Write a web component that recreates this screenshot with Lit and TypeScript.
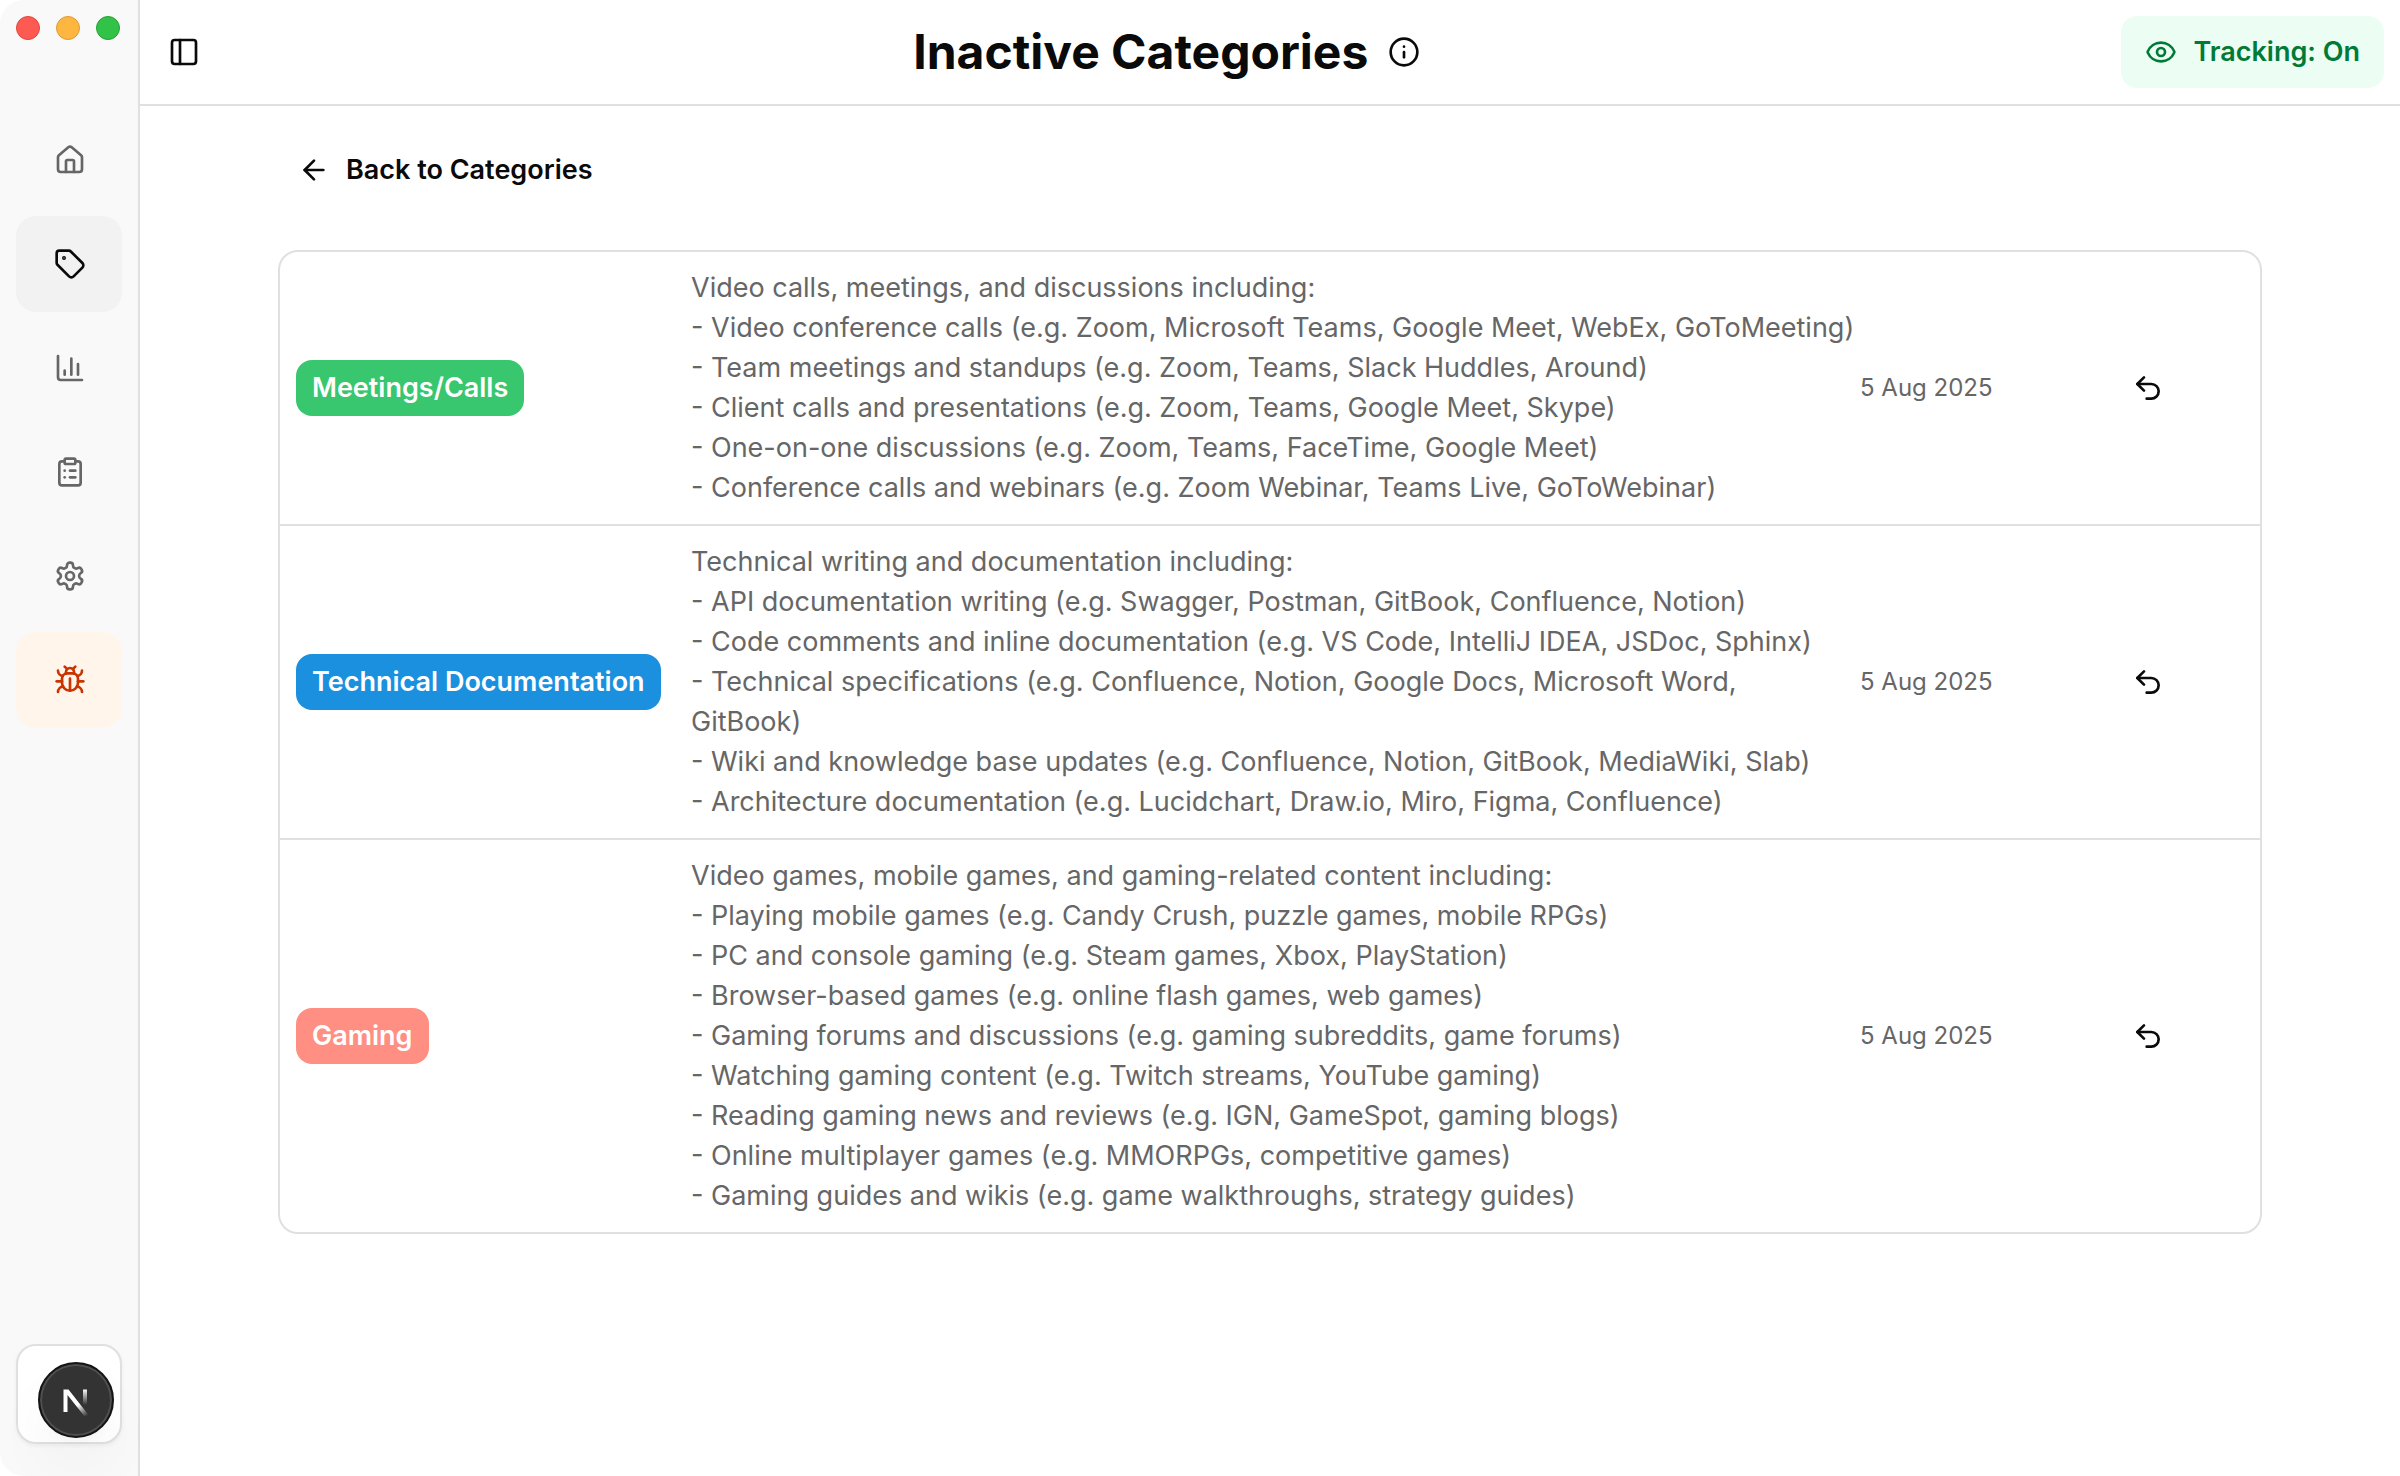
import { LitElement, html, css, svg } from "lit";
import { customElement } from "lit/decorators.js";
import { classMap } from "lit/directives/class-map.js";

type Shape = ReturnType<typeof svg>;

const shapes: Record<string, Shape> = {
  home: svg`<path d="M15 21v-8a1 1 0 0 0-1-1h-4a1 1 0 0 0-1 1v8"/><path d="M3 10a2 2 0 0 1 .709-1.528l7-5.999a2 2 0 0 1 2.582 0l7 5.999A2 2 0 0 1 21 10v9a2 2 0 0 1-2 2H5a2 2 0 0 1-2-2z"/>`,
  tag: svg`<path d="M12.586 2.586A2 2 0 0 0 11.172 2H4a2 2 0 0 0-2 2v7.172a2 2 0 0 0 .586 1.414l8.704 8.704a2.426 2.426 0 0 0 3.42 0l6.58-6.58a2.426 2.426 0 0 0 0-3.42z"/><circle cx="7.5" cy="7.5" r=".5" fill="currentColor"/>`,
  chart: svg`<path d="M3 3v16a2 2 0 0 0 2 2h16"/><path d="M18 17V9"/><path d="M13 17V5"/><path d="M8 17v-3"/>`,
  clipboard: svg`<rect width="8" height="4" x="8" y="2" rx="1" ry="1"/><path d="M16 4h2a2 2 0 0 1 2 2v14a2 2 0 0 1-2 2H6a2 2 0 0 1-2-2V6a2 2 0 0 1 2-2h2"/><path d="M12 11h4"/><path d="M12 16h4"/><path d="M8 11h.01"/><path d="M8 16h.01"/>`,
  settings: svg`<path d="M12.22 2h-.44a2 2 0 0 0-2 2v.18a2 2 0 0 1-1 1.73l-.43.25a2 2 0 0 1-2 0l-.15-.08a2 2 0 0 0-2.73.73l-.22.38a2 2 0 0 0 .73 2.73l.15.1a2 2 0 0 1 1 1.72v.51a2 2 0 0 1-1 1.74l-.15.09a2 2 0 0 0-.73 2.73l.22.38a2 2 0 0 0 2.73.73l.15-.08a2 2 0 0 1 2 0l.43.25a2 2 0 0 1 1 1.73V20a2 2 0 0 0 2 2h.44a2 2 0 0 0 2-2v-.18a2 2 0 0 1 1-1.73l.43-.25a2 2 0 0 1 2 0l.15.08a2 2 0 0 0 2.73-.73l.22-.39a2 2 0 0 0-.73-2.73l-.15-.08a2 2 0 0 1-1-1.74v-.5a2 2 0 0 1 1-1.74l.15-.09a2 2 0 0 0 .73-2.73l-.22-.38a2 2 0 0 0-2.73-.73l-.15.08a2 2 0 0 1-2 0l-.43-.25a2 2 0 0 1-1-1.73V4a2 2 0 0 0-2-2z"/><circle cx="12" cy="12" r="3"/>`,
  bug: svg`<path d="M12 20v-9"/><path d="M14 7a4 4 0 0 1 4 4v3a6 6 0 0 1-12 0v-3a4 4 0 0 1 4-4z"/><path d="M14.12 3.88 16 2"/><path d="M21 21a4 4 0 0 0-3.81-4"/><path d="M21 5a4 4 0 0 1-3.55 3.97"/><path d="M22 13h-4"/><path d="M3 21a4 4 0 0 1 3.81-4"/><path d="M3 5a4 4 0 0 0 3.55 3.97"/><path d="M6 13H2"/><path d="m8 2 1.88 1.88"/><path d="M9 7.13V6a3 3 0 1 1 6 0v1.13"/>`,
  panel: svg`<rect width="18" height="18" x="3" y="3" rx="2"/><path d="M9 3v18"/>`,
  info: svg`<circle cx="12" cy="12" r="10"/><path d="M12 16v-4"/><path d="M12 8h.01"/>`,
  eye: svg`<path d="M2.062 12.348a1 1 0 0 1 0-.696 10.75 10.75 0 0 1 19.876 0 1 1 0 0 1 0 .696 10.75 10.75 0 0 1-19.876 0"/><circle cx="12" cy="12" r="3"/>`,
  back: svg`<path d="m12 19-7-7 7-7"/><path d="M19 12H5"/>`,
  undo: svg`<path d="M9 14 4 9l5-5"/><path d="M4 9h10.5a5.5 5.5 0 0 1 5.5 5.5a5.5 5.5 0 0 1-5.5 5.5H11"/>`,
};

const icon = (name: string) => html`<svg
  class="icon"
  viewBox="0 0 24 24"
  fill="none"
  stroke="currentColor"
  stroke-width="2"
  stroke-linecap="round"
  stroke-linejoin="round"
  aria-hidden="true"
>${shapes[name]}</svg>`;

const navItems = [
  { icon: "home", label: "Home", href: "#home" },
  { icon: "tag", label: "Categories", href: "#categories", active: true },
  { icon: "chart", label: "Statistics", href: "#statistics" },
  { icon: "clipboard", label: "Projects", href: "#projects" },
  { icon: "settings", label: "Settings", href: "#settings" },
  { icon: "bug", label: "Report a bug", href: "#bug", alert: true },
];

const categories = [
  {
    name: "Meetings/Calls",
    tone: "green",
    date: "5 Aug 2025",
    lines: [
      "Video calls, meetings, and discussions including:",
      "- Video conference calls (e.g. Zoom, Microsoft Teams, Google Meet, WebEx, GoToMeeting)",
      "- Team meetings and standups (e.g. Zoom, Teams, Slack Huddles, Around)",
      "- Client calls and presentations (e.g. Zoom, Teams, Google Meet, Skype)",
      "- One-on-one discussions (e.g. Zoom, Teams, FaceTime, Google Meet)",
      "- Conference calls and webinars (e.g. Zoom Webinar, Teams Live, GoToWebinar)",
    ],
  },
  {
    name: "Technical Documentation",
    tone: "blue",
    date: "5 Aug 2025",
    lines: [
      "Technical writing and documentation including:",
      "- API documentation writing (e.g. Swagger, Postman, GitBook, Confluence, Notion)",
      "- Code comments and inline documentation (e.g. VS Code, IntelliJ IDEA, JSDoc, Sphinx)",
      "- Technical specifications (e.g. Confluence, Notion, Google Docs, Microsoft Word,",
      "GitBook)",
      "- Wiki and knowledge base updates (e.g. Confluence, Notion, GitBook, MediaWiki, Slab)",
      "- Architecture documentation (e.g. Lucidchart, Draw.io, Miro, Figma, Confluence)",
    ],
  },
  {
    name: "Gaming",
    tone: "coral",
    date: "5 Aug 2025",
    lines: [
      "Video games, mobile games, and gaming-related content including:",
      "- Playing mobile games (e.g. Candy Crush, puzzle games, mobile RPGs)",
      "- PC and console gaming (e.g. Steam games, Xbox, PlayStation)",
      "- Browser-based games (e.g. online flash games, web games)",
      "- Gaming forums and discussions (e.g. gaming subreddits, game forums)",
      "- Watching gaming content (e.g. Twitch streams, YouTube gaming)",
      "- Reading gaming news and reviews (e.g. IGN, GameSpot, gaming blogs)",
      "- Online multiplayer games (e.g. MMORPGs, competitive games)",
      "- Gaming guides and wikis (e.g. game walkthroughs, strategy guides)",
    ],
  },
];

@customElement("app-root")
export class AppRoot extends LitElement {
  static styles = css`
    :host {
      display: flex;
      min-height: 100vh;
      background: #fff;
      color: #0a0a0a;
      font-family: Inter, "Liberation Sans", sans-serif;
      font-size: 27px;
      line-height: 40px;
    }
    * {
      box-sizing: border-box;
    }
    button {
      font: inherit;
      color: inherit;
      background: none;
      border: 0;
      padding: 0;
      cursor: pointer;
    }
    a {
      color: inherit;
      text-decoration: none;
    }
    .icon {
      display: block;
      flex: none;
      width: 32px;
      height: 32px;
    }
    .sidebar {
      flex: none;
      display: flex;
      flex-direction: column;
      width: 140px;
      padding: 16px 16px 32px;
      background: #f9f9f9;
      border-right: 2px solid #e0e0e0;
      border-radius: 24px 0 0 24px;
    }
    .lights {
      display: flex;
      gap: 16px;
      height: 96px;
    }
    .light {
      width: 24px;
      height: 24px;
      border-radius: 50%;
      border: 1px solid;
    }
    .close {
      background: #ff5a52;
      border-color: #e0443e;
    }
    .minimise {
      background: #fdb63f;
      border-color: #dd9a35;
    }
    .maximise {
      background: #33c248;
      border-color: #24a036;
    }
    .nav {
      display: flex;
      flex-direction: column;
      gap: 8px;
      flex: 1;
    }
    .item {
      display: flex;
      align-items: center;
      height: 96px;
      padding-left: 38px;
      border-radius: 20px;
      color: #666;
    }
    .item.active {
      background: #f2f2f2;
      color: #0a0a0a;
    }
    .item.alert {
      background: #fff5ea;
      color: #c93400;
    }
    .account {
      height: 100px;
      background: #fff;
      border: 2px solid #e0e0e0;
      border-radius: 20px;
      box-shadow: 0 2px 4px rgba(0, 0, 0, 0.05);
    }
    .dev {
      position: fixed;
      left: 38px;
      bottom: 38px;
      display: grid;
      place-items: center;
      width: 76px;
      height: 76px;
      border-radius: 50%;
      background: #333;
      border: 2px solid #141414;
      box-shadow: inset 0 0 0 2px #4f4f4f, 0 32px 64px -8px rgba(0, 0, 0, 0.06),
        0 8px 16px -6px rgba(0, 0, 0, 0.04);
    }
    .mark {
      display: block;
      width: 32px;
      height: 32px;
      overflow: visible;
    }
    .page {
      flex: 1;
      min-width: 0;
    }
    .header {
      display: flex;
      align-items: center;
      justify-content: space-between;
      padding: 16px;
      border-bottom: 2px solid #e0e0e0;
    }
    .toggle {
      display: grid;
      place-items: center;
      width: 56px;
      height: 56px;
    }
    .heading {
      display: flex;
      align-items: center;
      gap: 20px;
    }
    .title {
      margin: 0;
      font-size: 48px;
      line-height: 64px;
      font-weight: 700;
    }
    .tracking {
      display: flex;
      align-items: center;
      gap: 16px;
      height: 72px;
      padding: 0 24px;
      border-radius: 16px;
      background: #ecfdf3;
      color: #007a37;
      font-weight: 600;
    }
    .content {
      max-width: 2048px;
      margin: 0 auto;
      padding: 32px;
    }
    .return {
      display: inline-flex;
      align-items: center;
      gap: 16px;
      height: 64px;
      padding: 0 20px;
      margin-bottom: 48px;
      font-weight: 600;
    }
    .card {
      border: 2px solid #e0e0e0;
      border-radius: 20px;
      overflow: hidden;
    }
    .table {
      width: 100%;
      table-layout: fixed;
      border-collapse: separate;
      border-spacing: 0;
    }
    .name-col {
      width: 395px;
    }
    .date-col {
      width: 192px;
    }
    .action-col {
      width: 224px;
    }
    .cell {
      padding: 16px;
      vertical-align: middle;
      text-align: left;
      font-weight: 400;
      white-space: nowrap;
    }
    .row + .row .cell {
      border-top: 2px solid #e0e0e0;
    }
    .badge {
      display: inline-block;
      padding: 8px 16px;
      border-radius: 16px;
      color: #fff;
      font-weight: 600;
      vertical-align: middle;
    }
    .green {
      background: #38c66f;
    }
    .blue {
      background: #1a90de;
    }
    .coral {
      background: #ff8f82;
    }
    .description {
      padding-right: 0;
      color: #666;
      white-space: pre;
    }
    .date {
      color: #666;
      font-size: 24px;
    }
    .restore {
      display: grid;
      place-items: center;
      width: 64px;
      height: 64px;
      margin: 0 auto;
    }
  `;

  render() {
    return html`
      <aside class="sidebar">
        <div class="lights">
          <span class="light close"></span>
          <span class="light minimise"></span>
          <span class="light maximise"></span>
        </div>
        <nav class="nav" aria-label="Main">
          ${navItems.map(
            (n) => html`<a
              class=${classMap({ item: true, active: !!n.active, alert: !!n.alert })}
              href=${n.href}
              aria-label=${n.label}
              >${icon(n.icon)}</a
            >`,
          )}
        </nav>
        <div class="account"></div>
      </aside>
      <div class="page">
        <header class="header">
          <button class="toggle" aria-label="Toggle sidebar">${icon("panel")}</button>
          <div class="heading">
            <h1 class="title">Inactive Categories</h1>
            <button aria-label="About inactive categories">${icon("info")}</button>
          </div>
          <button class="tracking">${icon("eye")}<span>Tracking: On</span></button>
        </header>
        <main class="content">
          <a class="return" href="#categories">${icon("back")}<span>Back to Categories</span></a>
          <div class="card">
            <table class="table" aria-label="Inactive categories">
              <colgroup>
                <col class="name-col" />
                <col />
                <col class="date-col" />
                <col class="action-col" />
              </colgroup>
              <tbody>
                ${categories.map(
                  (c) => html`<tr class="row">
                    <th class="cell" scope="row">
                      <span class="badge ${c.tone}">${c.name}</span>
                    </th>
                    <td class="cell description">${c.lines.join("\n")}</td>
                    <td class="cell date">${c.date}</td>
                    <td class="cell">
                      <button class="restore" aria-label="Restore ${c.name}">${icon("undo")}</button>
                    </td>
                  </tr>`,
                )}
              </tbody>
            </table>
          </div>
        </main>
      </div>
      <button class="dev" aria-label="Open developer tools">
        <svg class="mark" viewBox="0 0 32 32" fill="none" aria-hidden="true">
          <defs>
            <linearGradient id="slant" gradientUnits="userSpaceOnUse" x1="19" y1="20" x2="27" y2="32">
              <stop stop-color="#fff" />
              <stop offset="1" stop-color="#fff" stop-opacity="0" />
            </linearGradient>
            <linearGradient id="stem" gradientUnits="userSpaceOnUse" x1="25" y1="5" x2="25" y2="21">
              <stop stop-color="#fff" />
              <stop offset="1" stop-color="#fff" stop-opacity="0" />
            </linearGradient>
          </defs>
          <path d="M3.5 5.5h5L28.500 31l-3.500 2L7.500 11V28h-4z" fill="url(#slant)" />
          <rect x="23" y="5.500" width="4" height="16" fill="url(#stem)" />
        </svg>
      </button>
    `;
  }
}
